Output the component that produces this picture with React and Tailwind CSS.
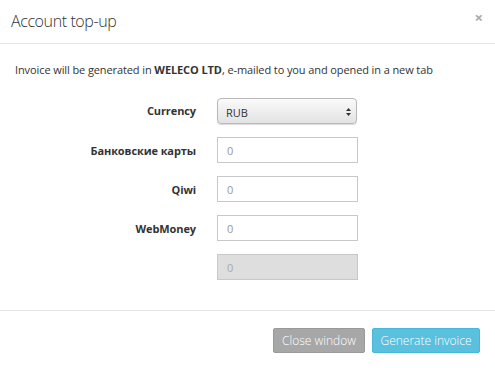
import React, { useState } from 'react';

const fields = [
  { label: 'Банковские карты', value: '0' },
  { label: 'Qiwi', value: '0' },
  { label: 'WebMoney', value: '0' },
];

const App = () => {
  const [currency, setCurrency] = useState('RUB');

  return (
    <div
      className="w-[495px] h-[368px] bg-white text-[#333] flex flex-col"
      style={{ fontFamily: '"Open Sans", "Noto Sans", sans-serif' }}
    >
      {/* header */}
      <div className="h-[44px] border-b border-[#e5e5e5] flex items-center justify-between pl-[11px] pr-[12px]">
        <h4 className="text-[16px] font-light tracking-[-0.4px] text-[#333] leading-none -mt-[2px]">Account top-up</h4>
        <button className="text-[#aaa] text-[15px] font-bold leading-none -mt-[9px]">×</button>
      </div>

      {/* body */}
      <div className="flex-1 px-[15px] pt-[18px]">
        <p className="text-[11px] tracking-[-0.1px] leading-[16px] text-[#333]">
          Invoice will be generated in <b className="font-bold">WELECO LTD</b>, e-mailed to you and opened in a new tab
        </p>

        <div className="mt-[20px] flex flex-col gap-[13px]">
          <div className="flex items-center">
            <label className="w-[181px] text-right text-[11px] tracking-[-0.1px] font-bold">Currency</label>
            <div className="ml-[21px] w-[140px] h-[26px] relative rounded-[4px] border border-[#b9b9b9] bg-gradient-to-b from-[#fafafa] to-[#e3e3e3] shadow-[0_1px_1px_rgba(0,0,0,0.15)]">
              <select
                value={currency}
                onChange={(e) => setCurrency(e.target.value)}
                className="appearance-none w-full h-full bg-transparent pl-[8px] text-[11px] text-[#333] outline-none"
              >
                <option>RUB</option>
                <option>USD</option>
                <option>EUR</option>
              </select>
              <svg className="absolute right-[5px] top-[9px]" width="5" height="8" viewBox="0 0 5 8">
                <path d="M2.5 0 L5 3 H0 Z M0 5 H5 L2.5 8 Z" fill="#333" />
              </svg>
            </div>
          </div>

          {fields.map((f) => (
            <div key={f.label} className="flex items-center">
              <label className="w-[181px] text-right text-[11px] tracking-[-0.1px] font-bold pt-[2px]">{f.label}</label>
              <input
                defaultValue={f.value}
                className="ml-[21px] w-[141px] h-[26px] border border-[#c8c8c8] bg-white px-[9px] text-[11px] text-[#999] outline-none"
              />
            </div>
          ))}

          <div className="flex items-center">
            <div className="w-[181px]" />
            <input
              value="0"
              disabled
              readOnly
              className="ml-[21px] w-[141px] h-[26px] border border-[#c8c8c8] bg-[#dedede] px-[9px] text-[11px] text-[#aaa] outline-none"
            />
          </div>
        </div>
      </div>

      {/* footer */}
      <div className="h-[58px] border-t border-[#e5e5e5] flex items-start justify-end gap-[7px] pt-[17px] pr-[15px]">
        <button className="h-[25px] w-[92px] rounded-[2px] bg-[#a7a7a7] border border-[#999] text-white text-[12px] font-light">
          Close window
        </button>
        <button className="h-[25px] w-[108px] rounded-[2px] bg-[#5bc0de] border border-[#46b8da] text-white text-[12px] font-light">
          Generate invoice
        </button>
      </div>
    </div>
  );
};

export default App;
